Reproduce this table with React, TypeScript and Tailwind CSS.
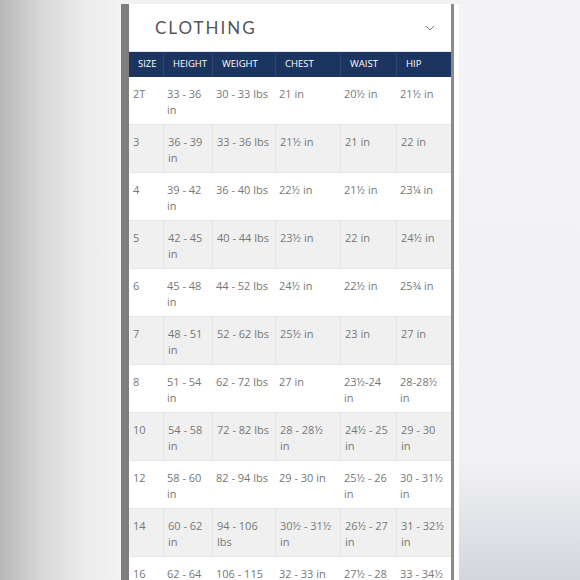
import React from "react";

const cols = ["SIZE", "HEIGHT", "WEIGHT", "CHEST", "WAIST", "HIP"];

// "|" marks where the cell breaks onto a second line
const rows: string[][] = [
  ["2T", "33 - 36|in", "30 - 33 lbs", "21 in", "20½ in", "21½ in"],
  ["3", "36 - 39|in", "33 - 36 lbs", "21½ in", "21 in", "22 in"],
  ["4", "39 - 42|in", "36 - 40 lbs", "22½ in", "21½ in", "23¼ in"],
  ["5", "42 - 45|in", "40 - 44 lbs", "23½ in", "22 in", "24½ in"],
  ["6", "45 - 48|in", "44 - 52 lbs", "24½ in", "22½ in", "25¾ in"],
  ["7", "48 - 51|in", "52 - 62 lbs", "25½ in", "23 in", "27 in"],
  ["8", "51 - 54|in", "62 - 72 lbs", "27 in", "23½-24|in", "28-28½|in"],
  ["10", "54 - 58|in", "72 - 82 lbs", "28 - 28½|in", "24½ - 25|in", "29 - 30|in"],
  ["12", "58 - 60|in", "82 - 94 lbs", "29 - 30 in", "25½ - 26|in", "30 - 31½|in"],
  ["14", "60 - 62|in", "94 - 106|lbs", "30½ - 31½|in", "26½ - 27|in", "31 - 32½|in"],
  ["16", "62 - 64|in", "106 - 115|lbs", "32 - 33 in", "27½ - 28|in", "33 - 34½|in"],
];

const grid = "grid grid-cols-[34px_49px_63px_65px_56px_55px]";

export default function App() {
  return (
    <div className="flex w-[580px] h-[580px] overflow-hidden bg-[#f2f2f3] font-['Open_Sans',sans-serif]">
      <div className="w-[121px] shrink-0 bg-[linear-gradient(to_right,#b8b8b8,#d8d8d8_35%,#ececec_70%,#f3f3f3)]" />

      <div className="flex pt-[4px] shrink-0">
        <div className="w-[8px] bg-[#7e7e7e]" />

        <div className="w-[322px] bg-white flex flex-col">
          <div className="h-[48px] shrink-0 flex items-center justify-between pl-[26px] pr-[16px] border-b border-[#dfe4ea]">
            <span className="text-[17px] tracking-[2px] text-[#555] font-['Lato',sans-serif] leading-none">
              CLOTHING
            </span>
            <svg width="10" height="6" viewBox="0 0 10 6" className="mt-[1px]">
              <path d="M1 1l4 4 4-4" fill="none" stroke="#777" strokeWidth="1" />
            </svg>
          </div>

          <div className={`${grid} h-[25px] shrink-0 bg-[#1c3460] text-white text-[9.5px]`}>
            {cols.map((c, i) => (
              <div
                key={c}
                className={`flex items-center pl-[9px] ${i > 0 ? "border-l border-[#2d4470]" : ""}`}
              >
                {c}
              </div>
            ))}
          </div>

          {rows.map((r, ri) => (
            <div
              key={r[0]}
              className={`${grid} h-[48px] shrink-0 border-b border-[#e6e6e6] text-[11px] leading-[16px] text-[#777] ${
                ri % 2 ? "bg-[#f0f0f0]" : "bg-white"
              }`}
            >
              {r.map((cell, ci) => (
                <div
                  key={ci}
                  className={`pl-[4px] pt-[9px] whitespace-pre ${
                    ci > 0 && ri % 2 ? "border-l border-[#e6e6e6]" : ""
                  }`}
                >
                  {cell.replace("|", "\n")}
                </div>
              ))}
            </div>
          ))}
        </div>

        <div className="w-[3px] bg-[#8a8a8a]" />
        <div className="w-[5px] bg-white" />
      </div>

      <div className="flex-1 bg-[linear-gradient(to_bottom,#f4f4f6,#f1f1f3_80%,#d3d6dd)]" />
    </div>
  );
}
